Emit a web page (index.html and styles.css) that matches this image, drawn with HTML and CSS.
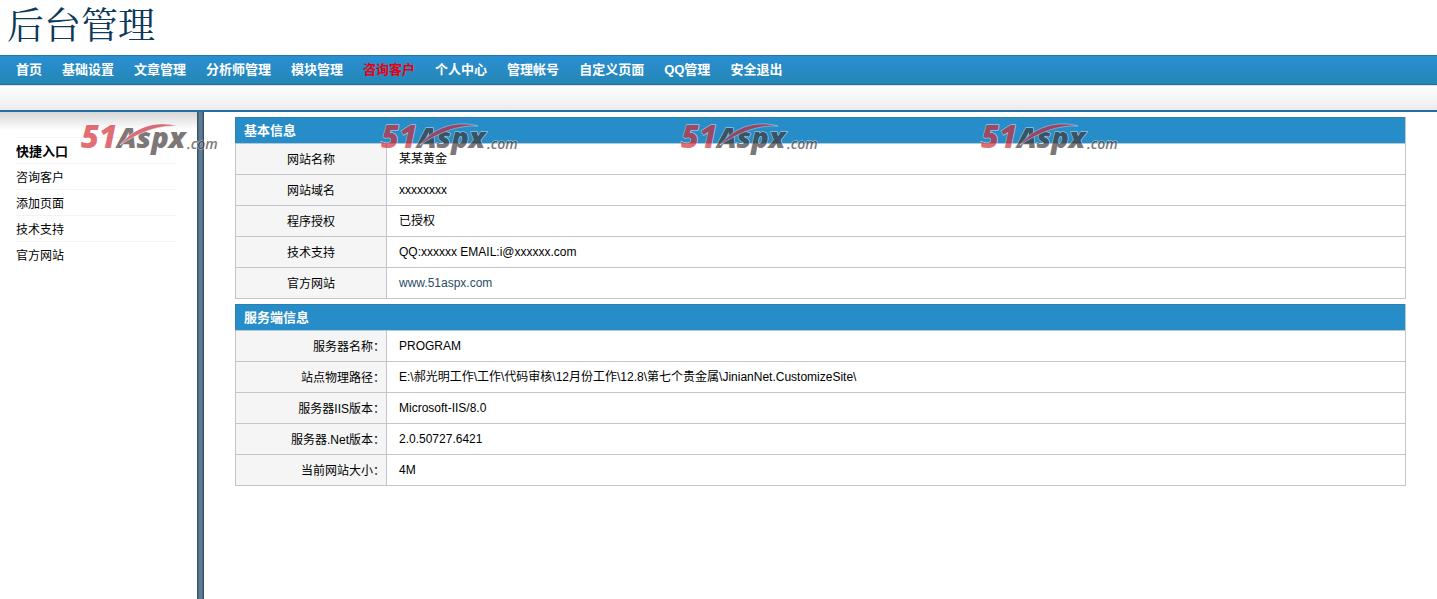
FILE: index.html
```html
<!DOCTYPE html>
<html lang="zh-CN">
<head>
<meta charset="utf-8">
<title>后台管理</title>
<link rel="stylesheet" href="styles.css">
</head>
<body>
<header class="masthead"><h1 class="title">后台管理</h1></header>
<nav class="nav">
  <a href="#">首页</a>
  <a href="#">基础设置</a>
  <a href="#">文章管理</a>
  <a href="#">分析师管理</a>
  <a href="#">模块管理</a>
  <a href="#" class="current">咨询客户</a>
  <a href="#">个人中心</a>
  <a href="#">管理帐号</a>
  <a href="#">自定义页面</a>
  <a href="#">QQ管理</a>
  <a href="#">安全退出</a>
</nav>
<div class="subbar"></div>
<div class="layout">
  <aside class="sidebar">
    <ul class="shortcuts">
      <li class="heading">快捷入口</li>
      <li><a href="#">咨询客户</a></li>
      <li><a href="#">添加页面</a></li>
      <li><a href="#">技术支持</a></li>
      <li><a href="#">官方网站</a></li>
    </ul>
  </aside>
  <div class="splitter"></div>
  <main class="content">
    <table class="info">
      <colgroup><col class="label-col"><col></colgroup>
      <thead><tr><th colspan="2">基本信息</th></tr></thead>
      <tbody>
        <tr><th scope="row">网站名称</th><td>某某黄金</td></tr>
        <tr><th scope="row">网站域名</th><td>xxxxxxxx</td></tr>
        <tr><th scope="row">程序授权</th><td>已授权</td></tr>
        <tr><th scope="row">技术支持</th><td>QQ:xxxxxx EMAIL:i@xxxxxx.com</td></tr>
        <tr><th scope="row">官方网站</th><td><a href="#" class="site">www.51aspx.com</a></td></tr>
      </tbody>
    </table>
    <table class="info server">
      <colgroup><col class="label-col"><col></colgroup>
      <thead><tr><th colspan="2">服务端信息</th></tr></thead>
      <tbody>
        <tr><th scope="row">服务器名称：</th><td>PROGRAM</td></tr>
        <tr><th scope="row">站点物理路径：</th><td>E:\郝光明工作\工作\代码审核\12月份工作\12.8\第七个贵金属\JinianNet.CustomizeSite\</td></tr>
        <tr><th scope="row">服务器IIS版本：</th><td>Microsoft-IIS/8.0</td></tr>
        <tr><th scope="row">服务器.Net版本：</th><td>2.0.50727.6421</td></tr>
        <tr><th scope="row">当前网站大小：</th><td>4M</td></tr>
      </tbody>
    </table>
  </main>
</div>
<div class="watermarks">
  <svg class="mark" viewBox="0 0 144 36"><text x="1" y="28" class="num">51</text><text x="37" y="28" class="word">Aspx</text><text x="107" y="29" class="com">.com</text><path class="swoosh" d="M40 25 C54 7 76 0 98 6 C78 5 60 12 40 25Z"/></svg>
  <svg class="mark" viewBox="0 0 144 36"><text x="1" y="28" class="num">51</text><text x="37" y="28" class="word">Aspx</text><text x="107" y="29" class="com">.com</text><path class="swoosh" d="M40 25 C54 7 76 0 98 6 C78 5 60 12 40 25Z"/></svg>
  <svg class="mark" viewBox="0 0 144 36"><text x="1" y="28" class="num">51</text><text x="37" y="28" class="word">Aspx</text><text x="107" y="29" class="com">.com</text><path class="swoosh" d="M40 25 C54 7 76 0 98 6 C78 5 60 12 40 25Z"/></svg>
  <svg class="mark" viewBox="0 0 144 36"><text x="1" y="28" class="num">51</text><text x="37" y="28" class="word">Aspx</text><text x="107" y="29" class="com">.com</text><path class="swoosh" d="M40 25 C54 7 76 0 98 6 C78 5 60 12 40 25Z"/></svg>
</div>
</body>
</html>
```
FILE: styles.css
```css
* { box-sizing: border-box; }
body {
  margin: 0;
  min-height: 100vh;
  display: flex;
  flex-direction: column;
  position: relative;
  background: #fff;
  color: #000;
  font: 12px/18px "Liberation Sans", "Noto Sans CJK SC", sans-serif;
}
a { color: inherit; text-decoration: none; }
.masthead { height: 55px; padding-left: 7px; }
.title {
  margin: 0;
  color: #0c3a58;
  font: 400 37px/46px "Noto Serif CJK SC", "Noto Sans CJK SC", serif;
}
.nav {
  display: flex;
  gap: 20px;
  padding: 0 16px;
  border-top: 1px solid #2479a4;
  border-bottom: 1px solid #266c98;
  background: linear-gradient(#298fd3, #2587b5);
  color: #fff;
  font-size: 13px;
  font-weight: bold;
  line-height: 28px;
}
.current { color: #e8000f; }
.subbar {
  height: 27px;
  border-top: 1px solid #d5e4ee;
  border-bottom: 2px solid #226f9e;
  background: linear-gradient(#fff, #ececec);
}
.layout { flex: 1; display: flex; }
.sidebar {
  width: 197px;
  padding: 25px 21px 0 16px;
  background: linear-gradient(#d6d6d6, #fff 18px);
}
.shortcuts { margin: 0; padding: 0; list-style: none; }
.shortcuts li { height: 26px; padding-top: 1px; border-top: 1px solid #f3f3f3; line-height: 26px; }
.shortcuts .heading { font-size: 13px; font-weight: bold; }
.splitter {
  width: 7px;
  background: linear-gradient(90deg, #3c5268 0 1px, #5d7c95 2px 5px, #3c5268 6px);
}
.content { flex: 1; padding: 5px 31px 0; }
.info {
  width: 100%;
  margin-bottom: 5px;
  table-layout: fixed;
  border-collapse: collapse;
}
.label-col { width: 151px; }
.info th, .info td { height: 31px; padding: 1px 12px 0; border: 1px solid #c4c5c8; }
.info td { padding-top: 0; text-align: left; }
.info thead th {
  height: 26px;
  padding: 1px 8px 0;
  background: #278dc8;
  border-color: #2b80af #b5c8d5 #b5c8d5 #2b80af;
  color: #fff;
  font-size: 13px;
  text-align: left;
}
.info tbody th { background: #f5f5f5; font-weight: normal; }
.info.server tbody th { padding: 1px 1px 0 0; text-align: right; }
.site { color: #2b4d66; }
.watermarks {
  position: absolute;
  top: 120px;
  left: 80px;
  display: flex;
  gap: 156px;
  pointer-events: none;
}
.mark { width: 144px; height: 36px; overflow: visible; opacity: 0.68; }
.mark text {
  font-family: "Open Sans", sans-serif;
  font-style: italic;
  font-weight: 800;
  stroke: #fff;
  stroke-width: 1px;
  paint-order: stroke;
}
.mark .num { fill: #d42a35; font-size: 31px; }
.mark .word { fill: #403838; font-size: 29px; }
.mark .com { fill: #403838; font-size: 14px; font-weight: 600; }
.swoosh { fill: #c92638; stroke: #fff; stroke-width: 0.5px; }
```
